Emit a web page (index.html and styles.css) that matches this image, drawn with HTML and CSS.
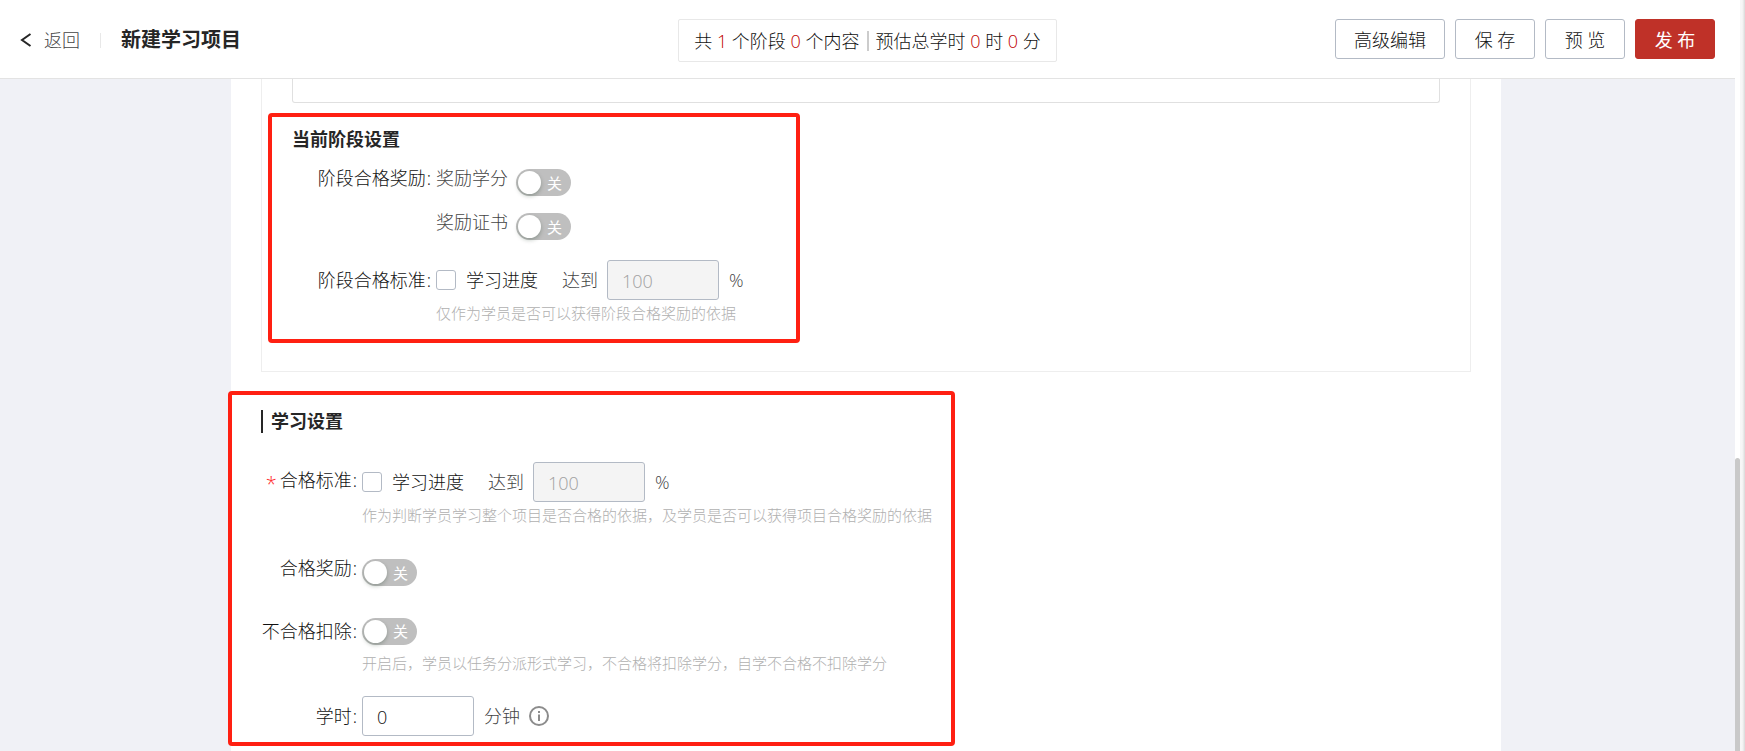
FILE: index.html
```html
<!DOCTYPE html>
<html lang="zh-CN">
<head>
<meta charset="utf-8">
<title>新建学习项目</title>
<link rel="stylesheet" href="styles.css">
</head>
<body>
<div class="app">
  <header class="topbar">
    <div class="topbar-left">
      <a class="back" href="#">
        <svg class="back-icon" viewBox="0 0 12 14" aria-hidden="true"><path d="M10.5 1 L2 7 L10.5 13"/></svg>
        <span>返回</span>
      </a>
      <span class="divider"></span>
      <h1 class="title">新建学习项目</h1>
    </div>
    <p class="summary">共 <b>1</b> 个阶段 <b>0</b> 个内容<i class="bar"></i>预估总学时 <b>0</b> 时 <b>0</b> 分</p>
    <div class="actions">
      <button class="btn" type="button">高级编辑</button>
      <button class="btn" type="button">保 存</button>
      <button class="btn" type="button">预 览</button>
      <button class="btn btn-primary" type="button">发 布</button>
    </div>
  </header>

  <main class="main">
    <div class="panel">
      <section class="stage">
        <div class="stage-content"></div>
        <h2 class="stage-title">当前阶段设置</h2>
        <div class="row row-top">
          <span class="label">阶段合格奖励<span class="colon">:</span></span>
          <span class="text" id="credit">奖励学分</span>
          <button class="switch" type="button" role="switch" aria-checked="false" aria-labelledby="credit"><span class="knob"></span>关</button>
        </div>
        <div class="row row-top row-second">
          <span class="label"></span>
          <span class="text" id="cert">奖励证书</span>
          <button class="switch" type="button" role="switch" aria-checked="false" aria-labelledby="cert"><span class="knob"></span>关</button>
        </div>
        <div class="row row-field">
          <span class="label">阶段合格标准<span class="colon">:</span></span>
          <input class="check" type="checkbox" id="stage-progress">
          <label class="check-text" for="stage-progress">学习进度</label>
          <label class="text" for="stage-percent">达到</label>
          <input class="field" type="text" id="stage-percent" value="100" disabled>
          <span class="text">%</span>
        </div>
        <p class="hint">仅作为学员是否可以获得阶段合格奖励的依据</p>
        <div class="mark mark-stage"></div>
      </section>

      <section class="study">
        <h2 class="study-title">学习设置</h2>
        <div class="row row-field">
          <span class="label"><span class="required">*</span>合格标准<span class="colon">:</span></span>
          <input class="check" type="checkbox" id="study-progress">
          <label class="check-text" for="study-progress">学习进度</label>
          <label class="text" for="study-percent">达到</label>
          <input class="field" type="text" id="study-percent" value="100" disabled>
          <span class="text">%</span>
        </div>
        <p class="hint">作为判断学员学习整个项目是否合格的依据，及学员是否可以获得项目合格奖励的依据</p>
        <div class="row row-top row-reward">
          <span class="label" id="reward">合格奖励<span class="colon">:</span></span>
          <button class="switch" type="button" role="switch" aria-checked="false" aria-labelledby="reward"><span class="knob"></span>关</button>
        </div>
        <div class="row row-deduct">
          <span class="label" id="deduct">不合格扣除<span class="colon">:</span></span>
          <button class="switch" type="button" role="switch" aria-checked="false" aria-labelledby="deduct"><span class="knob"></span>关</button>
        </div>
        <p class="hint hint-deduct">开启后，学员以任务分派形式学习，不合格将扣除学分，自学不合格不扣除学分</p>
        <div class="row row-hours">
          <label class="label" for="hours">学时<span class="colon">:</span></label>
          <input class="field" type="text" id="hours" value="0">
          <span class="text">分钟</span>
          <svg class="info" viewBox="0 0 20 20" aria-hidden="true"><circle cx="10" cy="10" r="9"/><path d="M10 5v2M10 8.500v6.500"/></svg>
        </div>
        <div class="mark mark-study"></div>
      </section>
    </div>
  </main>
</div>
<div class="scroll"><div class="thumb"></div></div>
<div class="edge"></div>
</body>
</html>
```
FILE: styles.css
```css
* {
  box-sizing: border-box;
}

body {
  margin: 0;
  height: 100vh;
  display: flex;
  overflow: hidden;
  background: #fff;
  color: #111;
  font-family: "Open Sans", "Noto Sans CJK SC", sans-serif;
  font-size: 18px;
  font-weight: 300;
  line-height: 20px;
}

h1, h2, p {
  margin: 0;
}

button, input {
  margin: 0;
  font: inherit;
  color: inherit;
}

.app {
  flex: 1;
  min-width: 0;
  display: flex;
  flex-direction: column;
}

/* Top bar */
.topbar {
  flex: none;
  display: grid;
  grid-template-columns: 1fr auto 1fr;
  align-items: start;
  padding: 19px 20px 16px;
  border-bottom: 1px solid #e3e3e3;
}

.topbar-left {
  display: flex;
  align-items: center;
  height: 42px;
}

.back {
  display: flex;
  align-items: center;
  gap: 12px;
  color: #444;
  text-decoration: none;
}

.back-icon {
  width: 12px;
  height: 14px;
  fill: none;
  stroke: #262626;
  stroke-width: 2;
}

.divider {
  width: 1px;
  height: 15px;
  margin: 0 20px;
  background: #e8e8e8;
}

.title {
  color: #262626;
  font-size: 20px;
  font-weight: 700;
}

.summary {
  display: flex;
  align-items: center;
  height: 43px;
  padding: 0 15px;
  border: 1px solid #e8e8e8;
  border-radius: 2px;
  white-space: pre;
}

.summary b {
  color: #c00000;
  font-weight: 300;
}

.bar {
  width: 2px;
  height: 20px;
  margin: 0 7px;
  background: #ccc;
}

.actions {
  display: flex;
  justify-content: flex-end;
  gap: 10px;
}

.btn {
  min-width: 80px;
  height: 40px;
  padding: 2px 18px 0;
  border: 1px solid #b3bac5;
  border-radius: 3px;
  background: #fff;
}

.btn-primary {
  border-color: #bf3128;
  background: #bf3128;
  color: #fff;
  font-weight: 400;
}

/* Page body */
.main {
  flex: 1;
  min-height: 0;
  padding: 0 234px 0 231px;
  overflow: hidden;
  background: #f0f1f6;
}

.panel {
  min-height: 100%;
  padding: 0 30px 16px;
  background: #fff;
}

.stage {
  position: relative;
  padding: 0 30px 47px;
  border: 1px solid #eee;
  border-top: 0;
}

.stage-content {
  height: 24px;
  border: 1px solid #e0e0e0;
  border-top: 0;
  border-radius: 0 0 3px 3px;
}

.stage-title {
  margin: 24px 0 18px;
  color: #262626;
  font-size: 18px;
  line-height: 24px;
}

.row {
  display: flex;
  align-items: center;
  height: 28px;
}

.row-top {
  align-items: flex-start;
  line-height: 18px;
}

.label {
  flex: none;
  margin-right: 5px;
  text-align: right;
  white-space: nowrap;
}

.stage .label {
  width: 139px;
}

.study .label {
  width: 96px;
}

.colon {
  margin-left: 1px;
}

.required {
  margin-right: 3px;
  color: #ff2a2a;
  font-size: 20px;
  line-height: 1;
  vertical-align: -4px;
}

.text {
  color: #444;
}

.row-second {
  margin-top: 16px;
}

.row-field,
.row-hours {
  height: 40px;
}

.stage .row-field {
  margin-top: 19px;
}

.check {
  flex: none;
  width: 20px;
  height: 20px;
  appearance: none;
  border: 1px solid #b3bac5;
  border-radius: 3px;
  background: #fff;
}

.check-text {
  margin: 0 24px 0 10px;
}

.field {
  width: 112px;
  height: 40px;
  margin: 0 10px 0 9px;
  padding: 2px 14px 0;
  border: 1px solid #b3bac5;
  border-radius: 3px;
  background: #fff;
}

.field:disabled {
  background: #f4f4f4;
  color: #a0a0a0;
}

.switch {
  display: flex;
  align-items: center;
  gap: 6px;
  width: 55px;
  height: 27px;
  padding: 0 2px;
  border: 0;
  border-radius: 14px;
  background: #bfbfbf;
  color: #fff;
  font-size: 15px;
  font-weight: 400;
}

.text + .switch {
  margin-left: 8px;
}

.knob {
  width: 23px;
  height: 23px;
  border-radius: 50%;
  background: #fff;
  box-shadow: 0 2px 4px rgba(0, 35, 11, 0.25);
}

.hint {
  margin-top: 2px;
  color: #b0b0b0;
  font-size: 15px;
  line-height: 22px;
}

.stage .hint {
  padding-left: 144px;
}

.study .hint {
  padding-left: 101px;
}

/* Study settings */
.study {
  position: relative;
  margin-top: 38px;
}

.study-title {
  margin-bottom: 29px;
  padding-left: 8px;
  border-left: 2px solid #262626;
  color: #262626;
  font-size: 18px;
  line-height: 23px;
}

.row-reward {
  margin-top: 33px;
}

.row-deduct {
  margin-top: 30px;
}

.hint-deduct {
  margin-top: 7px;
}

.row-hours {
  margin-top: 22px;
}

.row-hours .field {
  margin-left: 0;
}

.info {
  width: 20px;
  height: 20px;
  margin-left: 9px;
  fill: none;
  stroke: #8c8c8c;
  stroke-width: 2;
}

/* Highlight frames over the form */
.mark {
  position: absolute;
  border: 4px solid #ff2012;
  border-radius: 4px;
  pointer-events: none;
}

.mark-stage {
  top: 34px;
  left: 6px;
  width: 532px;
  height: 230px;
}

.mark-study {
  top: -19px;
  left: -33px;
  width: 727px;
  height: 355px;
}

/* Scroll track and window edge */
.scroll {
  flex: none;
  display: flex;
  align-items: flex-end;
  width: 5px;
}

.thumb {
  width: 5px;
  height: 39%;
  border-radius: 3px 3px 0 0;
  background: #c9c9c9;
}

.edge {
  flex: none;
  width: 5px;
  background: linear-gradient(to right, #f7f7f7 0 40%, #f0f0f0 60%, #d8d8d8);
}
```
